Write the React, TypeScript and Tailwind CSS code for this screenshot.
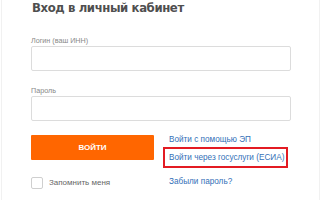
import React from 'react';

const sans = { fontFamily: "'Liberation Sans', Arial, sans-serif" };

export default function App() {
  return (
    <div className="h-[200px] w-[320px] overflow-hidden bg-white pl-[1px]" style={sans}>
      <div className="h-[200px] w-[319px] border-x border-[#f1f1f1] pl-[29px]">
        <h1
          className="pl-[1px] text-[13px] font-bold leading-[15px] tracking-[-0.4px] text-[#4f4f4f]"
          style={{ fontFamily: "'DejaVu Sans Condensed', 'Liberation Sans Narrow', sans-serif" }}
        >
          Вход в личный кабинет
        </h1>

        <label className="mt-[22px] block text-[7.2px] leading-[8px] text-[#888]">Логин (ваш ИНН)</label>
        <input
          type="text"
          className="mt-[1px] block h-[25px] w-[260px] rounded-[2px] border border-[#dcdcdc] bg-white outline-none"
        />

        <label className="mt-[16px] block text-[7.2px] leading-[8px] text-[#888]">Пароль</label>
        <input
          type="password"
          className="mt-[1px] block h-[25px] w-[260px] rounded-[2px] border border-[#dcdcdc] bg-white outline-none"
        />

        <div className="mt-[14px] flex">
          <div className="w-[132px]">
            <button
              type="button"
              className="flex h-[25px] w-[123px] items-center justify-center rounded-[1px] bg-[#ff6600] text-[8px] font-bold text-white"
            >
              ВОЙТИ
            </button>
            <label className="mt-[17px] flex items-center gap-[6px] text-[8px] text-[#666]">
              <span className="block h-[12px] w-[12px] rounded-[2px] border border-[#cfcfcf] bg-white" />
              Запомнить меня
            </label>
          </div>

          <div className="flex flex-col items-start text-[8.2px] text-[#3470b8]">
            <a className="ml-[6px] h-[10px] leading-[10px]">Войти с помощью ЭП</a>
            <a className="mt-[2px] flex h-[21px] w-[125px] items-center border-2 border-[#e31b23] pl-[4px] leading-[10px]">
              Войти через госуслуги (ЕСИА)
            </a>
            <a className="ml-[6px] mt-[9px] h-[10px] leading-[10px]">Забыли пароль?</a>
          </div>
        </div>
      </div>
    </div>
  );
}
